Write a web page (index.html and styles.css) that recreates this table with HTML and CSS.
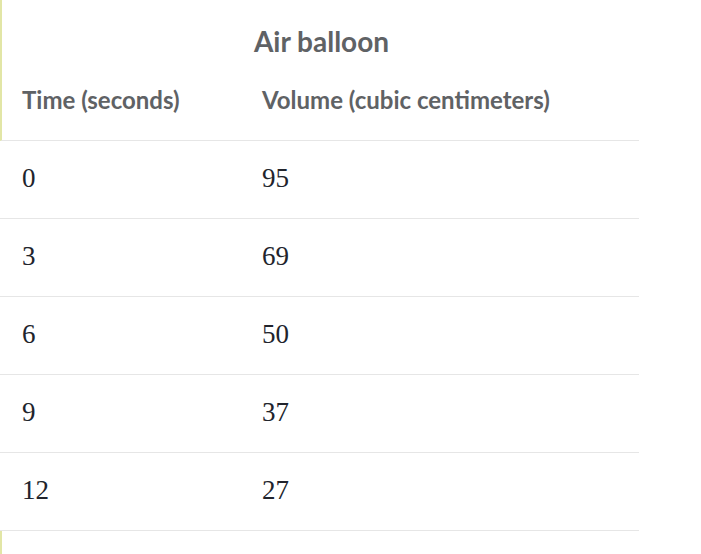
FILE: index.html
```html
<!DOCTYPE html>
<html>
<head>
<meta charset="utf-8">
<link rel="stylesheet" href="styles.css">
</head>
<body>
<div class="table">
  <div class="head">
    <div class="title">Air balloon</div>
    <div class="cols">
      <div class="hcell c1">Time (seconds)</div>
      <div class="hcell c2">Volume (cubic centimeters)</div>
    </div>
  </div>
  <div class="row"><div class="cell c1">0</div><div class="cell c2">95</div></div>
  <div class="row"><div class="cell c1">3</div><div class="cell c2">69</div></div>
  <div class="row"><div class="cell c1">6</div><div class="cell c2">50</div></div>
  <div class="row"><div class="cell c1">9</div><div class="cell c2">37</div></div>
  <div class="row"><div class="cell c1">12</div><div class="cell c2">27</div></div>
  <div class="after"></div>
</div>
</body>
</html>
```
FILE: styles.css
```css
html, body { margin: 0; padding: 0; background: #fff; }
.table { width: 639px; }
.head { border-left: 2px solid #e2e6a6; border-bottom: 1px solid #e6e6e6; height: 140px; display: flex; flex-direction: column; }
.title { font-family: Lato, sans-serif; font-weight: 700; font-size: 28px; color: #5f6265; text-align: center; padding-top: 25px; padding-left: 2px; height: 50px; line-height: 32px; }
.cols { display: flex; font-family: Lato, sans-serif; font-weight: 700; font-size: 24px; color: #5f6265; padding-top: 10px; }
.c1 { width: 240px; padding-left: 22px; }
.hcell.c1 { padding-left: 20px; }
.c2 { flex: 1; }
.row { display: flex; align-items: center; height: 74px; padding-bottom: 3px; border-bottom: 1px solid #e6e6e6; font-family: "Liberation Serif", serif; font-size: 27px; color: #21242c; }
.after { border-left: 2px solid #e2e6a6; height: 30px; }
```
